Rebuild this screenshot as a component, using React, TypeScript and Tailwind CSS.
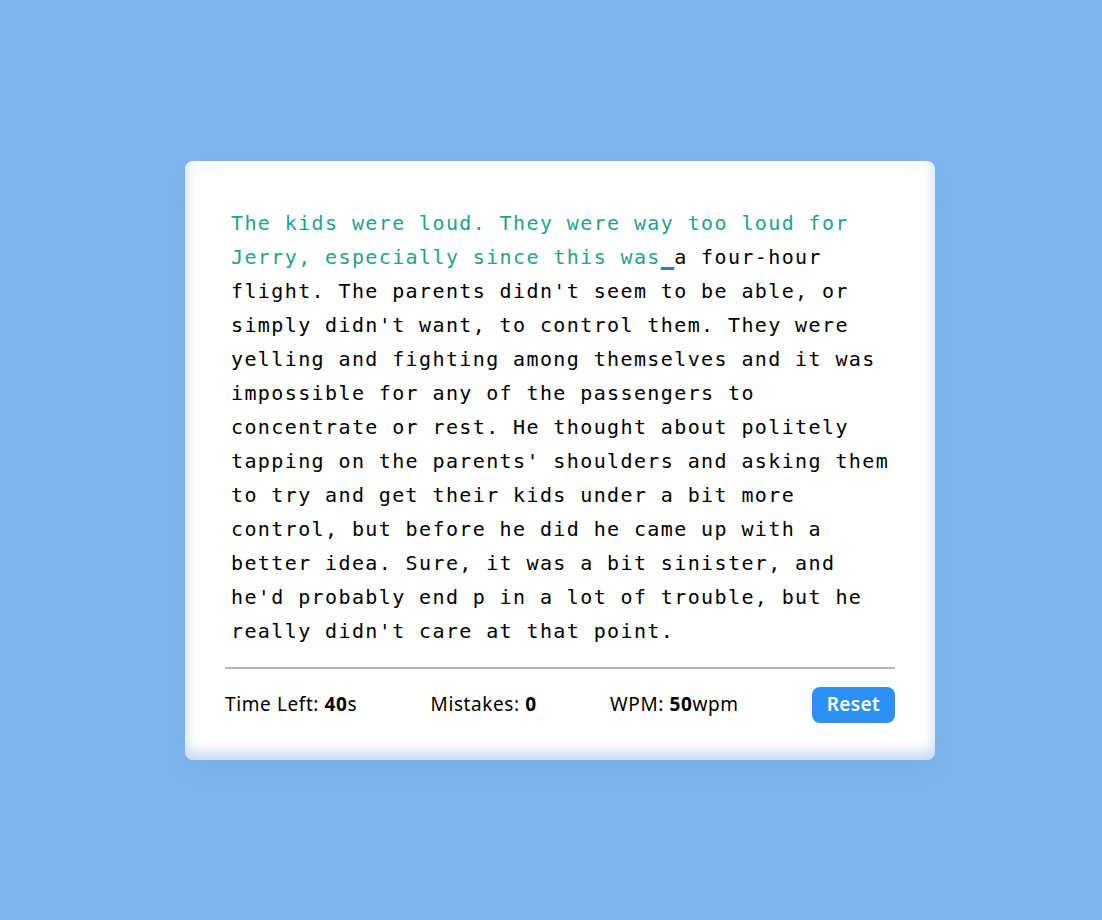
const typed = "The kids were loud. They were way too loud for Jerry, especially since this was";
const rest =
  "a four-hour flight. The parents didn't seem to be able, or simply didn't want, to control them. They were yelling and fighting among themselves and it was impossible for any of the passengers to concentrate or rest. He thought about politely tapping on the parents' shoulders and asking them to try and get their kids under a bit more control, but before he did he came up with a better idea. Sure, it was a bit sinister, and he'd probably end p in a lot of trouble, but he really didn't care at that point.";

function Stat({ label, value, unit }: { label: string; value: string; unit: string }) {
  return (
    <p className="text-[19px] tracking-[0.6px] text-black">
      {label}: <span className="font-bold">{value}</span>
      {unit}
    </p>
  );
}

export default function App() {
  return (
    <div className="min-h-screen bg-[#7fb6f1] flex items-center justify-center pl-[18px]">
      <div className="w-[750px] bg-white rounded-lg px-10 pt-[45px] pb-[37px] shadow-[inset_0_-7px_14px_rgba(120,165,230,0.45),0_12px_30px_rgba(40,90,160,0.08)]">
        <p
          className="ml-[6px] w-[664px] text-[20px] leading-[34px] tracking-[1.39px] text-black"
          style={{ fontFamily: '"DejaVu Sans Mono", "Liberation Mono", monospace' }}
        >
          <span className="text-[#22a38b]">{typed}</span>
          <span className="underline decoration-[#2b7fc1] decoration-[3px] underline-offset-[3px]"> </span>
          <span>{rest}</span>
        </p>

        <div className="mt-[19px] h-[2px] bg-[#b3b3b3]" />

        <div
          className="mt-[18px] flex items-center justify-between"
          style={{ fontFamily: '"Noto Sans", Inter, sans-serif' }}
        >
          <Stat label="Time Left" value="40" unit="s" />
          <Stat label="Mistakes" value="0" unit="" />
          <Stat label="WPM" value="50" unit="wpm" />
          <button className="h-9 w-[83px] rounded-lg bg-[#2b91f6] text-white text-[19px] tracking-[0.4px] font-semibold">
            Reset
          </button>
        </div>
      </div>
    </div>
  );
}
